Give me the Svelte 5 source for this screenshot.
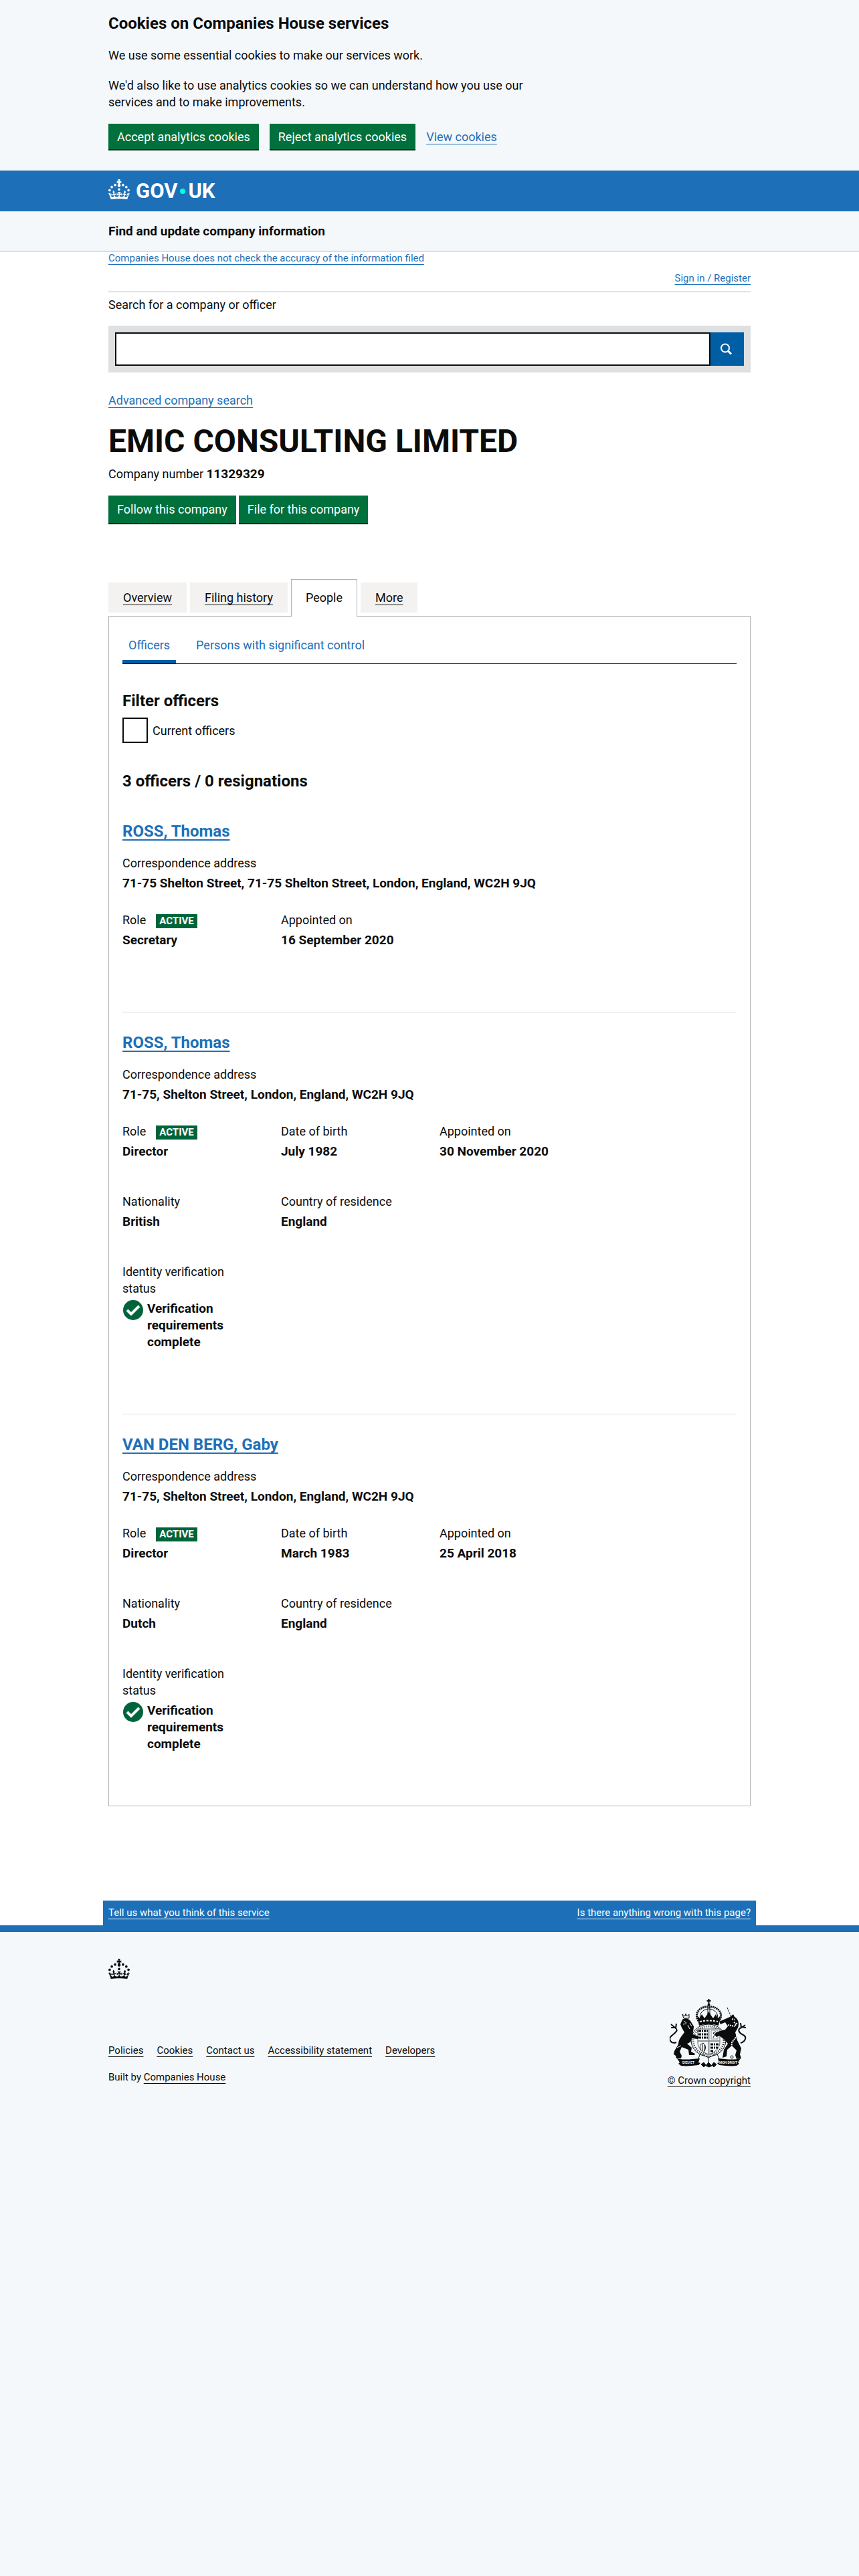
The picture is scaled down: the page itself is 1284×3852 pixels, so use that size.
<script>
  let search = ''
  let currentOnly = false

  const tabs = [
    { name: 'Overview' },
    { name: 'Filing history' },
    { name: 'People', active: true },
    { name: 'More' },
  ]

  const officers = [
    {
      name: 'ROSS, Thomas',
      address: '71-75 Shelton Street, 71-75 Shelton Street, London, England, WC2H 9JQ',
      rows: [
        [['Role', 'Secretary'], ['Appointed on', '16 September 2020']],
      ],
      verified: false,
    },
    {
      name: 'ROSS, Thomas',
      address: '71-75, Shelton Street, London, England, WC2H 9JQ',
      rows: [
        [['Role', 'Director'], ['Date of birth', 'July 1982'], ['Appointed on', '30 November 2020']],
        [['Nationality', 'British'], ['Country of residence', 'England']],
      ],
      verified: true,
    },
    {
      name: 'VAN DEN BERG, Gaby',
      address: '71-75, Shelton Street, London, England, WC2H 9JQ',
      rows: [
        [['Role', 'Director'], ['Date of birth', 'March 1983'], ['Appointed on', '25 April 2018']],
        [['Nationality', 'Dutch'], ['Country of residence', 'England']],
      ],
      verified: true,
    },
  ]

  const footerLinks = ['Policies', 'Cookies', 'Contact us', 'Accessibility statement', 'Developers']
</script>

{#snippet crown()}
  <svg class="crown" viewBox="0 0 32 30" width="32" height="30" fill="currentColor" aria-hidden="true">
    <path fill-rule="evenodd" d="M22.6 10.4c-1 .4-2-.1-2.4-1-.4-.9.1-2 1-2.4.9-.4 2 .1 2.4 1s-.1 2-1 2.4m-5.9 6.7c-.9.4-2-.1-2.4-1-.4-.9.1-2 1-2.4.9-.4 2 .1 2.4 1s-.1 2-1 2.4m10.8-3.7c-1 .4-2-.1-2.4-1-.4-.9.1-2 1-2.4.9-.4 2 .1 2.4 1s0 2-1 2.4m3.3 4.8c-1 .4-2-.1-2.4-1-.4-.9.1-2 1-2.4.9-.4 2 .1 2.4 1s-.1 2-1 2.4M17 4.7l2.3 1.2V2.5l-2.3.7-.2-.2.9-3h-3.4l.9 3-.2.2c-.1.1-2.3-.7-2.3-.7v3.4L15 4.7c.1.1.1.2.2.2l-1.3 4c-.1.2-.1.4-.1.6 0 1.1.8 2 1.9 2.2h.7c1-.2 1.9-1.1 1.9-2.1 0-.2 0-.4-.1-.6l-1.3-4c-.1-.2 0-.2.1-.3m-7.6 5.7c.9.4 2-.1 2.4-1 .4-.9-.1-2-1-2.4-.9-.4-2 .1-2.4 1s0 2 1 2.4m-5 3c.9.4 2-.1 2.4-1 .4-.9-.1-2-1-2.4-.9-.4-2 .1-2.4 1s.1 2 1 2.4m-3.2 4.8c.9.4 2-.1 2.4-1 .4-.9-.1-2-1-2.4-.9-.4-2 .1-2.4 1s0 2 1 2.4m14.8 11c4.4 0 8.6.3 12.3.8 1.1-4.5 2.4-7 3.7-8.8l-2.5-.9c.2 1.3.3 1.9 0 2.7-.4-.4-.8-1.1-1.1-2.3l-1.2 4c.7-.5 1.3-.8 2-.9-1.1 2.5-2.6 3.1-3.5 3-1.1-.2-1.7-1.2-1.5-2.1.3-1.2 1.5-1.5 2.1-.1 1.1-2.3-.8-3-2-2.3 1.9-1.9 2.1-3.5.6-5.6-2.1 1.6-2.1 3.2-1.2 5.5-1.2-1.4-3.2-.6-2.5 1.6.9-1.4 2.1-.5 1.9.8-.2 1.1-1.7 2.1-3.5 1.9-2.7-.2-2.9-2.1-2.9-3.6.7-.1 1.9.5 2.9 1.9l.4-4.3c-1.1 1.1-2.1 1.4-3.2 1.4.4-1.2 2.1-3 2.1-3h-5.4s1.7 1.9 2.1 3c-1.1 0-2.1-.2-3.2-1.4l.4 4.3c1-1.4 2.2-2 2.9-1.9-.1 1.5-.2 3.4-2.9 3.6-1.9.2-3.4-.8-3.5-1.9-.2-1.3 1-2.2 1.9-.8.7-2.3-1.2-3-2.5-1.6.9-2.2.9-3.9-1.2-5.5-1.5 2-1.3 3.7.6 5.6-1.2-.7-3.1 0-2 2.3.6-1.4 1.8-1.1 2.1.1.2.9-.3 1.9-1.5 2.1-.9.2-2.4-.5-3.5-3 .6 0 1.2.3 2 .9l-1.2-4c-.3 1.1-.7 1.9-1.1 2.3-.3-.8-.2-1.4 0-2.7l-2.9.9C1.3 23 2.6 25.5 3.7 30c3.7-.5 7.9-.8 12.3-.8" />
  </svg>
{/snippet}

<section class="cookie-banner" aria-label="Cookies on Companies House services">
  <div class="container">
    <h2>Cookies on Companies House services</h2>
    <div class="cookie-text">
      <p>We use some essential cookies to make our services work.</p>
      <p>We'd also like to use analytics cookies so we can understand how you use our services and to make improvements.</p>
    </div>
    <div class="cookie-actions">
      <button type="button" class="btn">Accept analytics cookies</button>
      <button type="button" class="btn">Reject analytics cookies</button>
      <a href="#cookies">View cookies</a>
    </div>
  </div>
</section>

<header>
  <div class="container">
    <a class="logo" href="#home" aria-label="GOV.UK">
      {@render crown()}
      <span class="wordmark">GOV<i class="dot"></i>UK</span>
    </a>
  </div>
</header>

<div class="service-nav">
  <div class="container"><strong>Find and update company information</strong></div>
</div>

<main>
  <div class="container">
    <div class="small"><a href="#accuracy">Companies House does not check the accuracy of the information filed</a></div>
    <div class="small sign-in"><a href="#signin">Sign in / Register</a></div>

    <form on:submit|preventDefault>
      <label class="search-label" for="search">Search for a company or officer</label>
      <div class="search-box">
        <input id="search" type="text" bind:value={search} />
        <button type="submit" aria-label="Search">
          <svg viewBox="0 0 20 20" width="20" height="20" fill="none" stroke="#fff" aria-hidden="true">
            <circle cx="7" cy="8.5" r="6" stroke-width="2" />
            <path d="M11 12.500l5 5" stroke-width="3" />
          </svg>
        </button>
      </div>
    </form>
    <a class="advanced" href="#advanced">Advanced company search</a>

    <h1>EMIC CONSULTING LIMITED</h1>
    <p class="number">Company number <strong>11329329</strong></p>
    <div class="company-actions">
      <button type="button" class="btn">Follow this company</button>
      <button type="button" class="btn">File for this company</button>
    </div>

    <nav class="tabs" aria-label="Company">
      {#each tabs as tab}
        <a href="#tab" class:active={tab.active}>{tab.name}</a>
      {/each}
    </nav>

    <section class="panel">
      <nav class="subnav" aria-label="People">
        <a href="#officers" class="active">Officers</a>
        <a href="#psc">Persons with significant control</a>
      </nav>

      <h2 class="filter-title">Filter officers</h2>
      <div class="filter">
        <input id="current" type="checkbox" bind:checked={currentOnly} />
        <label for="current">Current officers</label>
      </div>

      <h2 class="count">3 officers / 0 resignations</h2>

      {#each officers as officer}
        <article>
          <h2><a href="#officer">{officer.name}</a></h2>
          <dl class="address">
            <dt>Correspondence address</dt>
            <dd>{officer.address}</dd>
          </dl>
          {#each officer.rows as row}
            <div class="row">
              {#each row as [label, value]}
                <dl>
                  <dt>{label}{#if label === 'Role'}<span class="tag">ACTIVE</span>{/if}</dt>
                  <dd>{value}</dd>
                </dl>
              {/each}
            </div>
          {/each}
          {#if officer.verified}
            <div class="row">
              <dl>
                <dt>Identity verification status</dt>
                <dd class="verified">
                  <svg viewBox="0 0 30 30" width="30" height="30" aria-hidden="true">
                    <circle cx="15" cy="15" r="15" fill="#00643a" />
                    <path d="M6 15l6 6L24 9" fill="none" stroke="#fff" stroke-width="4" />
                  </svg>
                  <span>Verification requirements complete</span>
                </dd>
              </dl>
            </div>
          {/if}
        </article>
      {/each}
    </section>

    <div class="feedback small">
      <a href="#feedback">Tell us what you think of this service</a>
      <a href="#wrong">Is there anything wrong with this page?</a>
    </div>
  </div>
</main>

<footer class="small">
  <div class="container">
    {@render crown()}
    <div class="footer-meta">
      <div>
        <ul>
          {#each footerLinks as link}
            <li><a href="#footer">{link}</a></li>
          {/each}
        </ul>
        <p>Built by <a href="#ch">Companies House</a></p>
      </div>
      <a class="copyright" href="#copyright">
        <svg viewBox="0 0 117 104" width="117" height="104" fill="none" stroke="#0b0c0c" aria-hidden="true">
          <!-- crest -->
          <path d="M58.500 1v8M55.500 4h6" stroke-width="2" />
          <circle cx="58.500" cy="10" r="2" fill="#0b0c0c" stroke="none" />
          <path d="M43 34c-8-12 4-23 15.500-21C70 11 82 22 74 34" stroke-width="3" stroke-dasharray="2 1" />
          <path d="M46 30c-3-8 6-14 12.500-14S74 22 71 30M57 13v15M60 13v15" stroke-width="1" />
          <path d="M41 26l4 4 3-6 4 6 3-4 3.500-6 3.500 6 3 4 4-6 3 6 4-4-3 15c-9-3-20-3-29 0z" fill="#0b0c0c" stroke="none" />
          <path d="M45 35c9-2 18-2 27 0" stroke="#f4f8fb" stroke-width="2" stroke-dasharray="3 2" />
          <!-- garter and shield -->
          <ellipse cx="58" cy="63" rx="26" ry="24" fill="#f4f8fb" stroke-width="1" />
          <ellipse cx="58" cy="63" rx="23" ry="21" stroke-width="3" stroke-dasharray="1 2" />
          <path d="M42 46h33v20c0 9-7 15-16.500 18C49 81 42 75 42 66z" fill="#f4f8fb" stroke="#505a5f" />
          <path d="M43 49h14M43 54h14M43 59h14M61 69h13M61 74h11M61 79h5" stroke-width="3" stroke-dasharray="4 1 2 1" />
          <path d="M58.500 46v37M42 64h33" stroke="#8a9296" stroke-width="2" />
          <path d="M62 48h10v13H62z" stroke="#8a9296" />
          <path d="M65 59l2-4-2-3 4-2 1 3-2 2 3 3M47 78c-3-5-2-9 3-11 4 3 5 8 1 13M49 69v10M52 70v9" stroke-width="1" />
          <!-- lion -->
          <path d="M21 30l-2-6 4 3 1-4 2 4 3-3v6z" stroke-width="1" />
          <path d="M19 32c4-3 9-2 12 2l5 8c0 5-2 9-1 12l8 3-1 4-9-1c-1 6-4 7-7 8l7 6-1 6 6 3-1 2h-8l-1-8-10-4-3 7 3 6-1 4h-7l-1-4-3-2 1-5 6-10c0-8 5-12 9-18l-4-7-2-5z" fill="#0b0c0c" stroke="none" />
          <path d="M10 66C2 69-3 61 3 56s11-8 5-12l-6-5M8 44l-6 0M9 45l1-7" stroke-width="2" />
          <path d="M21 34l4 3M20 39l5-1M27 40l3 6M30 37l3 5M11 74l6-3" stroke="#f4f8fb" stroke-width="1" />
          <!-- unicorn -->
          <path d="M86 14l6 14" stroke-width="1" stroke-dasharray="3 1" />
          <path d="M90 28l5-4 2 4c6 3 8 11 4 18l-3 5 3 12 6 12-2 9 2 6-7 1-2-6 2-7-7-7-7 6-1 10-6 2 2-12 6-9-5-6-8-6-4 2-3-5 8-4 8-2 4-5-4-6-7 3-2-4z" fill="#0b0c0c" stroke="none" />
          <path d="M106 67c7-2 10-9 4-12s-10-8-3-11l6-4M108 43l6 1M107 44l-1-7" stroke-width="2" />
          <path d="M93 31l4 1M96 36l4 2-3 4M87 40l10 2M101 56l-8 10-1 18" stroke="#f4f8fb" stroke-width="2" stroke-dasharray="2 1" />
          <circle cx="93" cy="88" r="2" />
          <!-- motto ribbon -->
          <path d="M46 82l-3 8M70 82l4 8M49 84l9 5 10-5M58 89v8" />
          <path d="M11 90c11 3 22 1 34 0l-2 6 3 1-3 3c-10 1-17 2-26 1l-4-3 2-2zM106 90c-11 3-22 1-34 0l2 6-3 1 3 3c10 1 17 2 26 1l4-3-2-2z" fill="#0b0c0c" stroke="none" />
          <path d="M47 99l4-3 3 4-3 3zM70 99l-4-3-3 4 3 3zM54 101l4-5 5 5-4 2z" fill="#0b0c0c" />
          <text x="19" y="98">DIEU ET</text>
          <text x="74" y="98">MON DROIT</text>
        </svg>
        <span>© Crown copyright</span>
      </a>
    </div>
  </div>
</footer>

<style>
  :global(body) {
    margin: 0;
    background: #f4f8fb;
    color: #0b0c0c;
    font: 18px/25px Roboto, "Liberation Sans", sans-serif;
  }
  h1, h2, p, dl, dd, ul { margin: 0; padding: 0; }
  h2 { font-size: 24px; line-height: 30px; }
  strong, dd { font-size: 19px; font-weight: 700; }
  a { color: #1d70b8; text-decoration-thickness: 1px; text-underline-offset: 4px;
      text-decoration-skip-ink: none; }
  button, input { font: inherit; margin: 0; border-radius: 0; }
  .container { max-width: 960px; margin: 0 auto; }
  .small { font-size: 15px; line-height: 20px; }

  .btn { border: 0; background: #00703c; color: #fff; box-shadow: 0 2px 0 #002d18;
         height: 38px; padding: 0 13px; }

  .cookie-banner { padding: 20px 0 32px; }
  .cookie-text { max-width: 640px; }
  .cookie-text p { margin-top: 20px; }
  .cookie-actions { display: flex; align-items: center; gap: 16px; margin-top: 20px; }

  header { background: #1d70b8; padding: 13px 0 12px; }
  .logo { display: flex; gap: 9px; color: #fff; text-decoration: none; }
  .wordmark { display: flex; align-items: center; font-size: 31px; line-height: 36px;
              font-weight: 700; }
  .dot { width: 8px; height: 8px; border-radius: 50%; background: #00ffe0; margin: 0 4px; }

  .service-nav { border-bottom: 1px solid #8eb8dc; padding: 17px 0; }

  main { background: #fff; border-bottom: 10px solid #1d70b8; }
  .sign-in { text-align: right; padding: 10px 0; border-bottom: 1px solid #b1b4b6; }
  .search-label { display: block; padding: 6px 0 19px; }
  .search-box { display: flex; background: #dee0e2; padding: 10px; }
  .search-box input { flex: 1; min-width: 0; height: 50px; box-sizing: border-box;
                      border: 2px solid #0b0c0c; background: #fff; padding: 4px; }
  .search-box button { width: 50px; height: 50px; border: 0; padding: 0; background: #005ea5;
                       display: grid; place-items: center; }
  .advanced { display: inline-block; margin-top: 29px; }
  h1 { font-size: 48px; line-height: 50px; margin-top: 24px; }
  .number { margin-top: 11px; }
  .company-actions { display: flex; gap: 4px; margin-top: 20px; }
  .company-actions .btn { height: 41px; }

  .tabs { display: flex; align-items: center; gap: 5px; margin-top: 84px; }
  .tabs a { background: #f3f2f1; color: #0b0c0c; padding: 10px 22px; }
  .tabs .active { background: #fff; border: 1px solid #b1b4b6; border-bottom: 0;
                  padding: 14px 21px 16px; margin-bottom: -1px; text-decoration: none; }
  .panel { border: 1px solid #b1b4b6; padding: 30px 20px 80px; }

  .subnav { display: flex; gap: 21px; border-bottom: 1px solid #0b0c0c; }
  .subnav a { padding: 0 9px 10px; border-bottom: 5px solid transparent; text-decoration: none; }
  .subnav .active { border-color: #005ea5; }

  .filter-title { margin-top: 40px; }
  .filter { display: flex; align-items: center; gap: 7px; margin-top: 10px; }
  .filter input { appearance: none; width: 38px; height: 38px; border: 2px solid #0b0c0c; }
  .count { margin: 42px 0 45px; }

  article { padding-bottom: 95px; }
  article + article { border-top: 1px solid #dee0e2; padding-top: 30px; }
  article:last-child { padding-bottom: 0; }
  article h2 a { text-decoration-thickness: 2px; }
  dd { margin-top: 5px; }
  .address { margin: 20px 0 30px; }
  .row { display: grid; grid-template-columns: repeat(3, 237px); }
  .row + .row { margin-top: 50px; }
  .row dl { padding-right: 40px; }
  .row dt { max-width: 177px; }
  .tag { display: inline-block; margin-left: 15px; padding: 0 5px; background: #00643a;
         color: #fff; font-size: 15px; line-height: 21px; font-weight: 700; }
  .verified { display: flex; gap: 6px; max-width: 177px; }
  .verified svg { flex: none; margin-left: 1px; }

  .feedback { display: flex; justify-content: space-between; margin: 141px -8px 0;
              padding: 8px 8px 9px; background: #1d70b8; }
  .feedback a { color: #fff; }

  footer { padding: 40px 0; }
  footer a { color: #0b0c0c; }
  footer .crown { display: block; }
  .footer-meta { display: flex; justify-content: space-between; align-items: flex-end;
                 margin-top: 29px; }
  .footer-meta ul { display: flex; gap: 20px; list-style: none; }
  .footer-meta p { margin: 20px 0 5px; }
  .copyright { display: flex; flex-direction: column; align-items: center; gap: 9px; }
  .copyright text { font-size: 5px; font-weight: 700; fill: #f4f8fb; stroke: none; }
</style>
